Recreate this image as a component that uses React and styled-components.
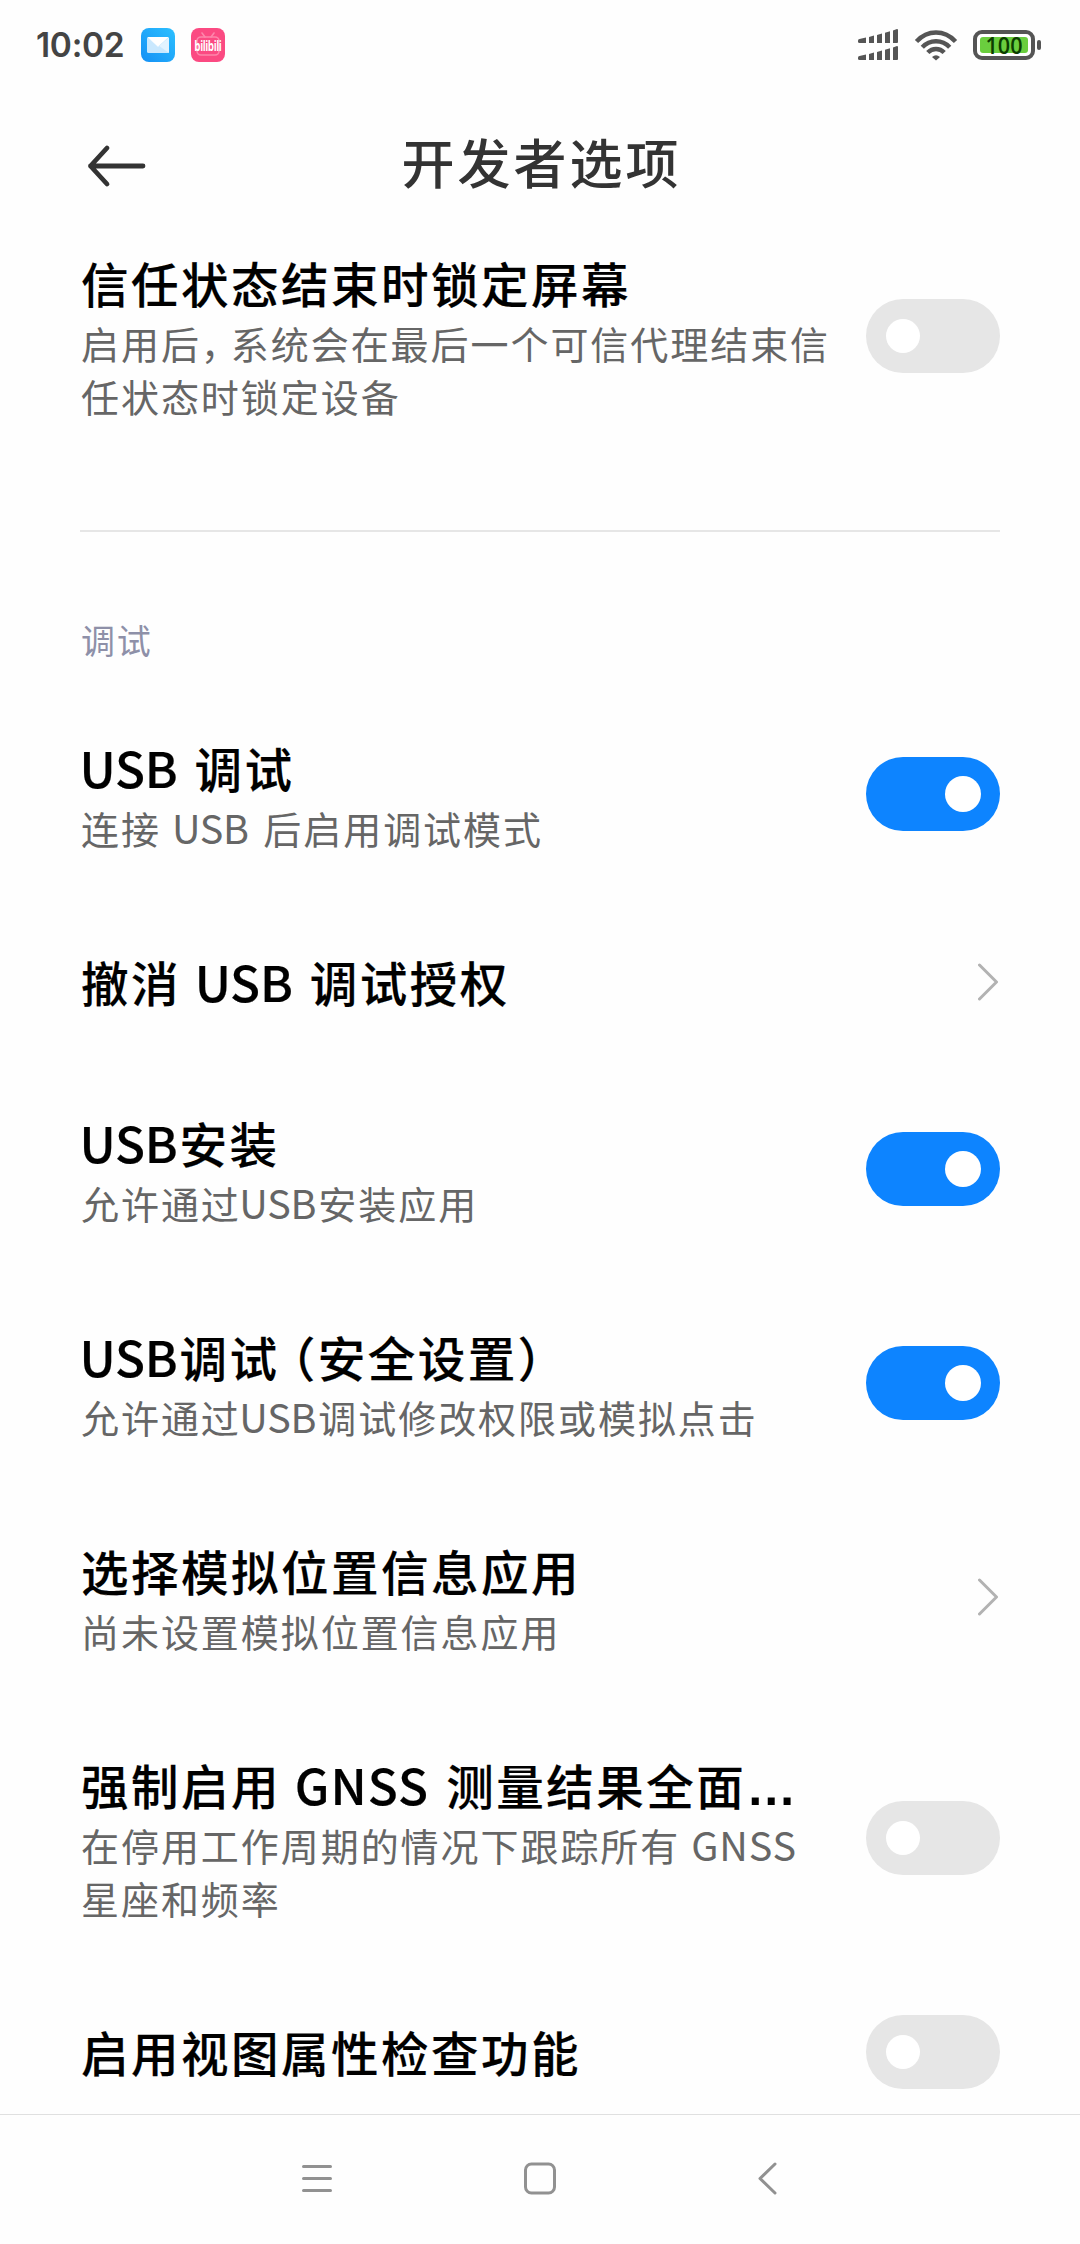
import React, { useState } from 'react';
import styled, { createGlobalStyle } from 'styled-components';

const GlobalStyle = createGlobalStyle`
  * {
    box-sizing: border-box;
  }

  body {
    margin: 0;
    background: #fefefe;
    font-family: 'Noto Sans CJK SC', sans-serif;
  }
`;

// Define styled components
const Screen = styled.div`
  display: flex;
  flex-direction: column;
  width: 1080px;
  height: 2244px;
  overflow: hidden;
`;

const StatusBar = styled.header`
  flex: none;
  display: flex;
  align-items: center;
  justify-content: space-between;
  height: 90px;
  padding: 0 39px 0 36px;
`;

const StatusGroup = styled.div`
  display: flex;
  align-items: center;
  gap: 16px;
`;

const Clock = styled.span`
  width: 89px;
  font-family: Inter, sans-serif;
  font-size: 33.5px;
  font-weight: 600;
  line-height: 40px;
  letter-spacing: -0.3px;
  white-space: nowrap;
  color: #444;
`;

const StatusIcon = styled.svg`
  display: block;
  flex: none;
  overflow: visible;
`;

const TitleBar = styled.div`
  flex: none;
  display: grid;
  grid-template-columns: 72px 1fr 72px;
  align-items: center;
  height: 112px;
  padding: 36px 80px 0;
`;

const BackButton = styled.button`
  display: flex;
  width: 72px;
  height: 72px;
  padding: 0;
  border: 0;
  background: none;
`;

const PageTitle = styled.h1`
  margin: 0 0 8px 3px;
  font-size: 53px;
  font-weight: 500;
  line-height: 70px;
  letter-spacing: 3px;
  text-align: center;
  color: #333;
`;

const Settings = styled.main`
  flex: 1;
  min-height: 0;
  overflow: hidden;
  padding: 0 80px;
`;

const Row = styled.div`
  display: flex;
  align-items: center;
  justify-content: space-between;
  padding: 47px 0;
`;

const RowText = styled.div`
  width: 756px;
  padding-left: 1px;
`;

const RowTitle = styled.div`
  font-size: 47.5px;
  font-weight: 500;
  line-height: 67px;
  letter-spacing: 2.5px;
  word-spacing: 2px;
  white-space: nowrap;
  color: #000;
  -webkit-text-stroke: 0.2px #000;
`;

const RowSummary = styled.div`
  font-size: 38px;
  line-height: 53px;
  letter-spacing: 1.95px;
  word-spacing: 2px;
  color: #666;
`;

// Latin words are slightly larger and set tighter than the Chinese text
const Latin = styled.span`
  margin: 0 2px 0 -1.5px;
  font-size: 1.04em;
  line-height: 1;
  letter-spacing: ${({ $wide }) => ($wide ? '0.022em' : '-0.005em')};
`;

// Full-width punctuation loses part of its empty side
const Punctuation = styled.span`
  margin-left: ${({ $mark }) => ($mark === '（' ? '12px' : '0')};
  margin-right: ${({ $mark }) => ($mark === '，' ? '9px' : '0')};
  font-feature-settings: 'halt';
`;

const Ellipsis = styled.span`
  font-family: 'Liberation Sans', sans-serif;
  font-size: 50px;
  font-weight: 700;
  line-height: 1;
  letter-spacing: 0;
  -webkit-text-stroke: 0;
`;

const Divider = styled.hr`
  height: 2px;
  margin: 61px 0 0;
  border: 0;
  background: #e6e6e6;
`;

const SectionLabel = styled.h2`
  margin: 0;
  padding: 83px 0 22px 1px;
  font-size: 34px;
  font-weight: 400;
  line-height: 50px;
  letter-spacing: 1.8px;
  color: #8e90a8;
`;

// The negative margin keeps title-only rows at their text height
const Switch = styled.button`
  flex: none;
  display: flex;
  align-items: center;
  justify-content: ${({ $on }) => ($on ? 'flex-end' : 'flex-start')};
  width: 134px;
  height: 74px;
  margin: -4px 0;
  padding: 0 ${({ $on }) => ($on ? '19px' : '20px')};
  border: 0;
  border-radius: 37px;
  background: ${({ $on }) => ($on ? '#0d84ff' : '#e6e6e6')};
`;

const Knob = styled.span`
  width: ${({ $on }) => ($on ? '36px' : '34px')};
  height: ${({ $on }) => ($on ? '36px' : '34px')};
  border-radius: 50%;
  background: #fff;
`;

const NavBar = styled.nav`
  flex: none;
  display: flex;
  align-items: center;
  justify-content: center;
  gap: 163px;
  height: 130px;
  padding-bottom: 1px;
  border-top: 1px solid #e0e0e0;
`;

const NavButton = styled.button`
  width: 60px;
  height: 60px;
  padding: 0;
  border: 0;
  background: none;
`;

const items = [
  { type: 'switch', title: 'USB 调试', summary: '连接 USB 后启用调试模式', on: true },
  { type: 'link', title: '撤消 USB 调试授权' },
  { type: 'switch', title: 'USB安装', summary: '允许通过USB安装应用', on: true },
  { type: 'switch', title: 'USB调试（安全设置）', summary: '允许通过USB调试修改权限或模拟点击', on: true },
  { type: 'link', title: '选择模拟位置信息应用', summary: '尚未设置模拟位置信息应用' },
  { type: 'switch', title: '强制启用 GNSS 测量结果全面…', summary: '在停用工作周期的情况下跟踪所有 GNSS 星座和频率', on: false },
  { type: 'switch', title: '启用视图属性检查功能', on: false },
];

// Wrap the Latin words and the punctuation of a label
const renderLabel = (text) =>
  text.split(/([A-Z]+|[（，…])/).map((part, index) => {
    if (/^[A-Z]+$/.test(part)) {
      return <Latin key={index} $wide={part.length > 3}>{part}</Latin>;
    }
    if (part === '…') {
      return <Ellipsis key={index}>{part}</Ellipsis>;
    }
    if (part === '（' || part === '，') {
      return <Punctuation key={index} $mark={part}>{part}</Punctuation>;
    }
    return part;
  });

const MailIcon = () => (
  <StatusIcon width="34" height="34" viewBox="0 0 34 34">
    <defs>
      <linearGradient id="mail" x1="0" y1="1" x2="1" y2="0">
        <stop offset="0" stopColor="#1490f5" />
        <stop offset="1" stopColor="#2cc0ff" />
      </linearGradient>
    </defs>
    <rect width="34" height="34" rx="8" fill="url(#mail)" />
    <rect x="6" y="9" width="22" height="16" rx="1.5" fill="#c9e8fe" />
    <path d="M6.5 9.5 L17 19 L28 9.5 L28 25 Z" fill="#e2f3ff" />
    <path d="M6.5 9 H27.5 L17 18.5 Z" fill="#fff" />
  </StatusIcon>
);

const BilibiliIcon = () => (
  <StatusIcon width="34" height="34" viewBox="0 0 34 34">
    <rect width="34" height="34" rx="8" fill="#fb4a82" />
    <g fill="none" stroke="#fd86ab" strokeWidth="1.6" strokeLinecap="round">
      <rect x="6" y="9" width="22" height="18" rx="4" />
      <path d="M11 5 L14 9 M23 5 L20 9" />
    </g>
    <text
      x="17"
      y="22.5"
      textAnchor="middle"
      textLength="27"
      lengthAdjust="spacingAndGlyphs"
      fontFamily="Inter, sans-serif"
      fontSize="14"
      fontWeight="700"
      fill="#fff"
    >
      bilibili
    </text>
  </StatusIcon>
);

const SignalIcon = () => (
  <StatusIcon width="41" height="32" viewBox="0 0 41 32" fill="#555">
    {[0, 17].map((y) => (
      <g key={y} transform={`translate(0 ${y})`}>
        <path d="M0 11.5 Q0 10.4 1.5 10 L8 8.6 V14 H1.5 Q0 14 0 12.8 Z" />
        <path d="M11 8 L16 6.6 V14 H11 Z" />
        <path d="M19 6 L24 4.5 V14 H19 Z" />
        <path d="M27 3.8 L32 2.3 V14 H27 Z" />
        <path d="M35 1.5 L39 0 Q40 0 40 1 V13 Q40 14 39 14 H35 Z" />
      </g>
    ))}
  </StatusIcon>
);

const WifiIcon = () => (
  <StatusIcon width="42" height="31" viewBox="0 0 42 31" fill="none" stroke="#555" strokeWidth="4.4">
    <path d="M1.5 11.5 C12.5 -0.5 29.5 -0.5 40.5 11.5" />
    <path d="M7.3 17.3 C14.8 9.3 27.2 9.3 34.7 17.3" />
    <path d="M12.8 22.6 C17.3 17.8 24.7 17.8 29.2 22.6" />
    <path d="M17 27 Q21 23.4 25 27 L21 30.5 Z" fill="#555" stroke="none" />
  </StatusIcon>
);

const BatteryIcon = () => (
  <StatusIcon width="68" height="30" viewBox="0 0 68 30">
    <rect x="2" y="2" width="58" height="26" rx="7" fill="#fff" stroke="#555" strokeWidth="4" />
    <rect x="7" y="7" width="48" height="16" rx="3" fill="#6ace3e" />
    <rect x="64" y="10" width="4" height="10" rx="2" fill="#555" />
    <text
      x="31"
      y="23.5"
      textAnchor="middle"
      textLength="37"
      lengthAdjust="spacingAndGlyphs"
      fontFamily="'Open Sans', sans-serif"
      fontSize="23"
      fontWeight="600"
      fill="#0b3d00"
    >
      100
    </text>
  </StatusIcon>
);

const Chevron = () => (
  <svg width="22" height="38" viewBox="0 0 22 38" fill="none">
    <path
      d="M1.5 2 L18.5 19 L1.5 36"
      stroke="#b2b2b2"
      strokeWidth="3"
      strokeLinecap="round"
      strokeLinejoin="round"
    />
  </svg>
);

const Toggle = ({ initial }) => {
  const [on, setOn] = useState(initial);

  return (
    <Switch $on={on} role="switch" aria-checked={on} onClick={() => setOn(!on)}>
      <Knob $on={on} />
    </Switch>
  );
};

const SettingRow = ({ item }) => {
  const { type, title, summary, on } = item;

  return (
    <Row>
      <RowText>
        <RowTitle>{renderLabel(title)}</RowTitle>
        {summary && <RowSummary>{renderLabel(summary)}</RowSummary>}
      </RowText>
      {type === 'switch' ? <Toggle initial={on} /> : <Chevron />}
    </Row>
  );
};

const App = () => {
  return (
    <>
      <GlobalStyle />
      <Screen>
        <StatusBar>
          <StatusGroup>
            <Clock>10:02</Clock>
            <MailIcon />
            <BilibiliIcon />
          </StatusGroup>
          <StatusGroup>
            <SignalIcon />
            <WifiIcon />
            <BatteryIcon />
          </StatusGroup>
        </StatusBar>
        <TitleBar>
          <BackButton aria-label="返回">
            <svg width="72" height="72" viewBox="0 0 72 72" fill="none">
              <path
                d="M27 19 L10.5 37 L27 55 M10.5 37 H63"
                stroke="#333"
                strokeWidth="4.8"
                strokeLinecap="round"
                strokeLinejoin="round"
              />
            </svg>
          </BackButton>
          <PageTitle>开发者选项</PageTitle>
        </TitleBar>
        <Settings>
          <SettingRow
            item={{
              type: 'switch',
              title: '信任状态结束时锁定屏幕',
              summary: '启用后，系统会在最后一个可信代理结束信任状态时锁定设备',
              on: false,
            }}
          />
          <Divider />
          <SectionLabel>调试</SectionLabel>
          {items.map((item) => (
            <SettingRow key={item.title} item={item} />
          ))}
        </Settings>
        <NavBar>
          <NavButton aria-label="菜单">
            <svg width="60" height="60" viewBox="0 0 60 60" fill="none">
              <path
                d="M16.5 17.5 H43.5 M16.5 29.5 H43.5 M16.5 41.5 H43.5"
                stroke="#919191"
                strokeWidth="3"
                strokeLinecap="round"
              />
            </svg>
          </NavButton>
          <NavButton aria-label="主屏幕">
            <svg width="60" height="60" viewBox="0 0 60 60" fill="none">
              <rect x="15.5" y="15" width="29" height="29" rx="6" stroke="#919191" strokeWidth="3" />
            </svg>
          </NavButton>
          <NavButton aria-label="返回上一页">
            <svg width="60" height="60" viewBox="0 0 60 60" fill="none">
              <path
                d="M42 15 L27 29.5 L42 44"
                stroke="#919191"
                strokeWidth="3"
                strokeLinecap="round"
                strokeLinejoin="round"
              />
            </svg>
          </NavButton>
        </NavBar>
      </Screen>
    </>
  );
};

export default App;
